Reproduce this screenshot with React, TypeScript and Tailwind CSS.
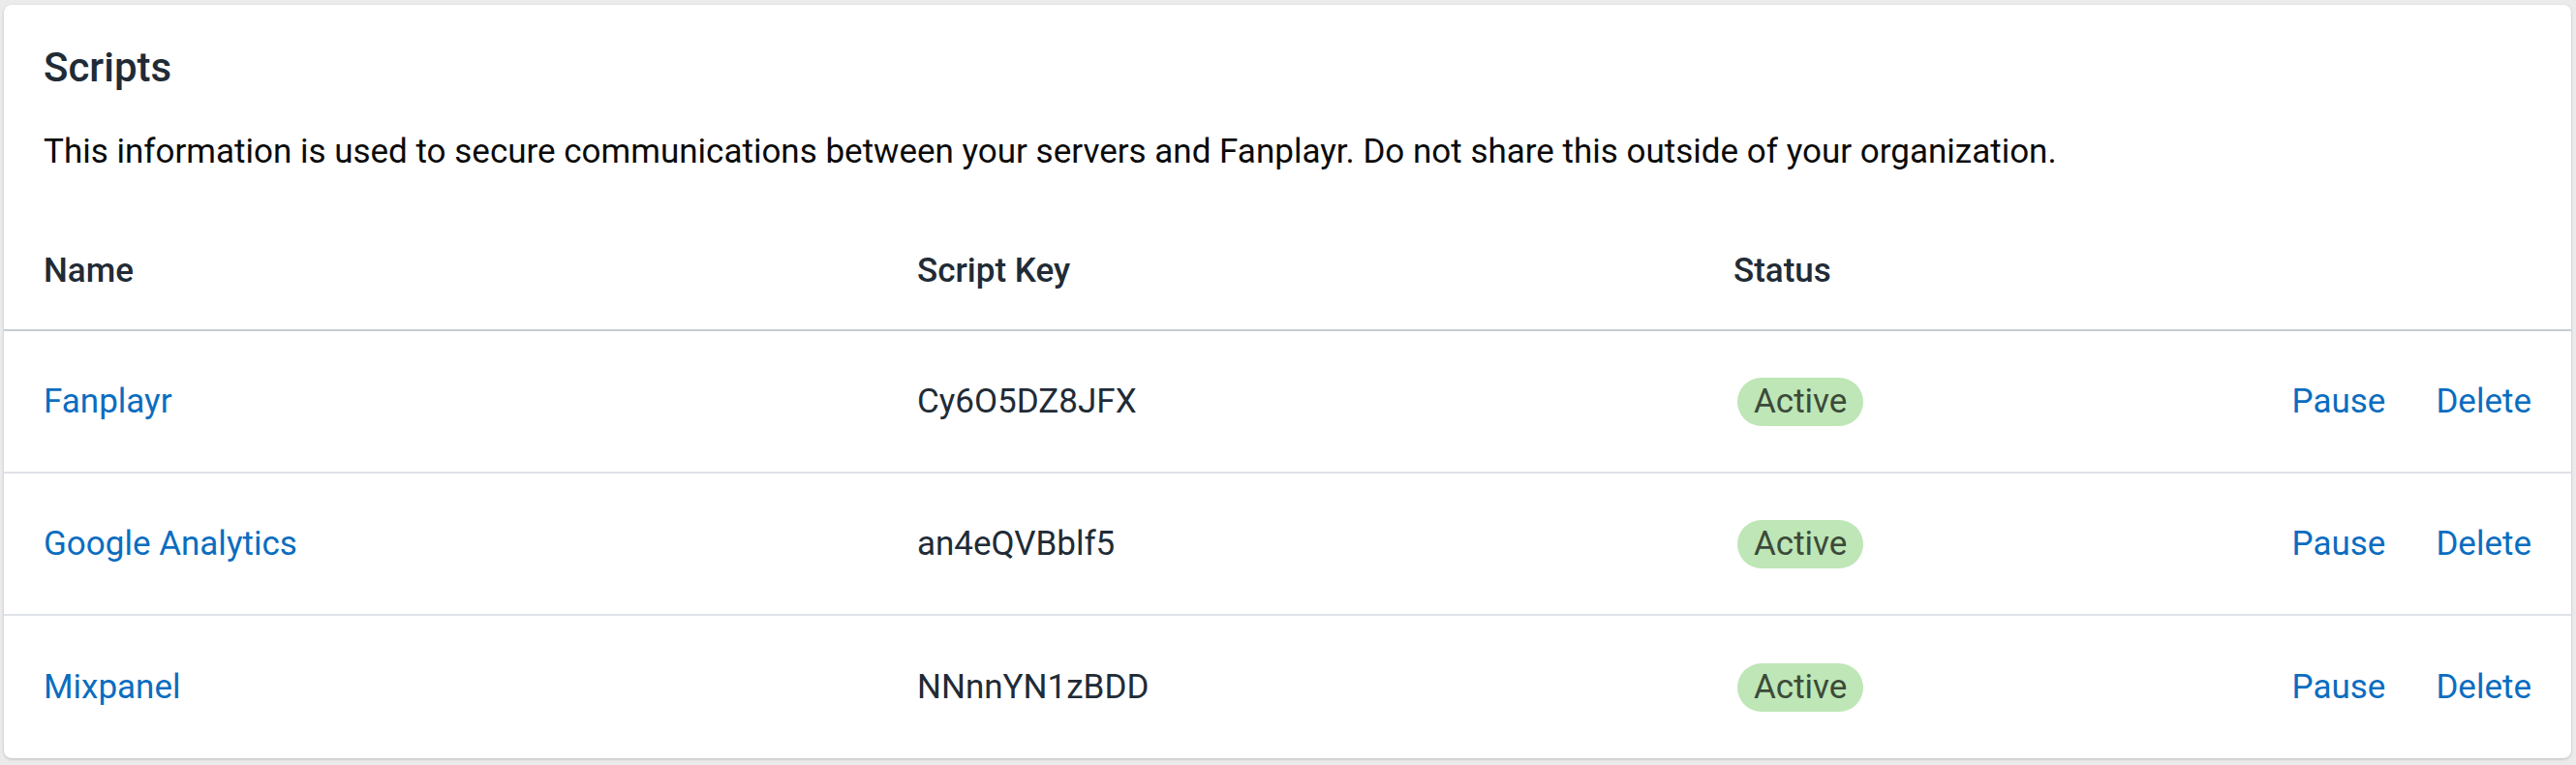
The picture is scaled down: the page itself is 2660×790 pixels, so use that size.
const scripts = [
  { name: "Fanplayr", key: "Cy6O5DZ8JFX", status: "Active" },
  { name: "Google Analytics", key: "an4eQVBblf5", status: "Active" },
  { name: "Mixpanel", key: "NNnnYN1zBDD", status: "Active" },
];

const App = () => {
  return (
    <div
      className="min-h-screen bg-[#ebebeb] pl-[4px] pr-[5px] pt-[5px]"
      style={{ fontFamily: "Roboto, 'Noto Sans', sans-serif" }}
    >
      <div className="bg-white rounded-[8px] shadow-[0_1px_3px_rgba(0,0,0,0.2)] overflow-hidden">
        <div className="px-[41px] pt-[41px]">
          <h1 className="text-[42px] leading-[48px] font-medium text-[#212b36]">Scripts</h1>
          <p className="mt-[39px] text-[35px] leading-[48px] text-[#0a0a0a]">
            This information is used to secure communications between your servers and Fanplayr. Do not share this
            outside of your organization.
          </p>
        </div>

        <div className="mt-[75px]">
          <div className="grid grid-cols-[902px_843px_1fr_auto] px-[41px] pb-[36px] border-b-2 border-[#c4cdd5] text-[35px] leading-[48px] font-medium text-[#212b36]">
            <div>Name</div>
            <div>Script Key</div>
            <div>Status</div>
            <div></div>
          </div>

          {scripts.map((s, i) => (
            <div
              key={s.key}
              className={
                "grid grid-cols-[902px_843px_1fr_auto] items-center px-[41px] h-[147px] text-[35px] leading-[48px] " +
                (i < scripts.length - 1 ? "border-b-2 border-[#dfe3e8]" : "")
              }
            >
              <a href="#" className="text-[#0b6dbf] justify-self-start">
                {s.name}
              </a>
              <div className="text-[#212b36]">{s.key}</div>
              <div>
                <span className="ml-[4px] inline-flex items-center h-[50px] px-[17px] rounded-full bg-[#bee6b6] text-[#3c4a3a]">
                  {s.status}
                </span>
              </div>
              <div className="flex gap-[52px] text-[#0b6dbf]">
                <a href="#">Pause</a>
                <a href="#">Delete</a>
              </div>
            </div>
          ))}
        </div>
      </div>
    </div>
  );
};

export default App;
